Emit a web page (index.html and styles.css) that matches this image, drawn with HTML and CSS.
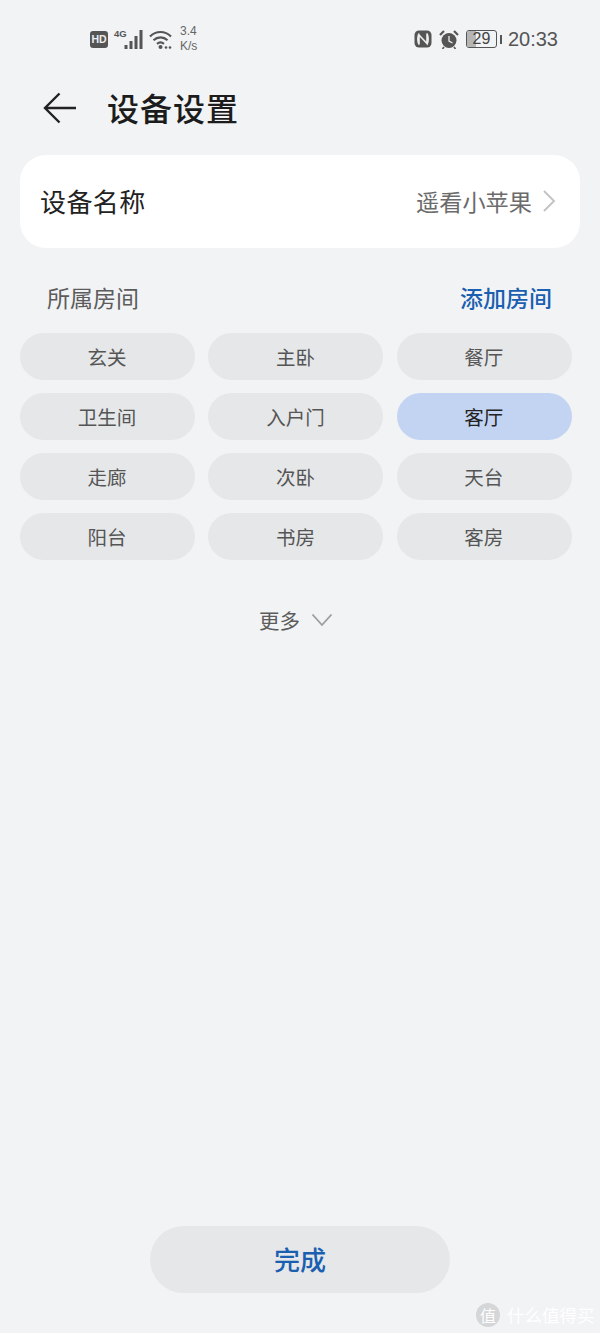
FILE: index.html
```html
<!DOCTYPE html>
<html lang="zh-CN">
<head>
<meta charset="utf-8">
<title>设备设置</title>
<link rel="stylesheet" href="styles.css">
</head>
<body>
<div class="page">
  <div class="status">
    <div class="status-left">
      <span class="hd">HD</span>
      <span class="net-label">4G</span>
      <svg class="bars" width="19" height="19" viewBox="0 0 19 19"><g fill="#555"><rect x="0.500" y="15" width="3" height="4"/><rect x="5.500" y="11" width="3" height="8"/><rect x="10.500" y="6" width="3" height="13"/><rect x="15.500" y="0" width="3" height="19"/></g></svg>
      <svg class="wifi" width="23" height="19" viewBox="0 0 23 19"><g fill="none" stroke="#555" stroke-width="2.200"><path d="M1 6.500C7 .5 16 .5 22 6.500"/><path d="M4.500 10.300C8.500 6.500 14.500 6.500 18.500 10.300"/><path d="M8 13.800C10 12.300 13 12.300 15 13.800"/></g><g fill="#555"><circle cx="11.500" cy="17" r="2"/><circle cx="17" cy="17.500" r="1.300"/><circle cx="21" cy="17.500" r="1.300"/></g></svg>
      <span class="speed">3.4<br>K/s</span>
    </div>
    <div class="status-right">
      <svg class="nfc" width="18" height="18" viewBox="0 0 18 18"><rect x="0.500" y="0.500" width="17" height="17" rx="4.500" fill="#555"/><path d="M5 3.500C3.500 7 3.500 11 5 14.500V5l8 8.500V3.500C14.500 7 14.500 11 13 14.500" fill="none" stroke="#eee" stroke-width="1.600"/></svg>
      <svg class="alarm" width="20" height="19" viewBox="0 0 20 19"><circle cx="10" cy="10.500" r="7.500" fill="#555"/><path d="M10 6v5l3.500 2" fill="none" stroke="#eee" stroke-width="1.300"/><path d="M1 5 5 1M19 5l-4-4" stroke="#555" stroke-width="2.200"/><path d="M5 17l-1.500 2M15 17l1.500 2" stroke="#555" stroke-width="1.600"/></svg>
      <span class="battery"><span class="battery-body"><span class="battery-fill"></span><span class="battery-num">29</span></span><span class="battery-cap"></span></span>
      <span class="clock">20:33</span>
    </div>
  </div>

  <header class="title-bar">
    <svg class="back" width="34" height="32" viewBox="0 0 34 32"><path d="M33 16H2M16.500 1.500 2 16l14.500 14.500" fill="none" stroke="#222" stroke-width="2.400"/></svg>
    <h1 class="title">设备设置</h1>
  </header>

  <section class="name-card">
    <span class="name-label">设备名称</span>
    <span class="name-value">遥看小苹果
      <svg class="chev" width="14" height="22" viewBox="0 0 14 22"><path d="M2 1l10 10L2 21" fill="none" stroke="#c4c4c4" stroke-width="2"/></svg>
    </span>
  </section>

  <div class="room-head">
    <span class="room-title">所属房间</span>
    <span class="room-add">添加房间</span>
  </div>

  <div class="rooms">
    <div class="room">玄关</div>
    <div class="room">主卧</div>
    <div class="room">餐厅</div>
    <div class="room">卫生间</div>
    <div class="room">入户门</div>
    <div class="room active">客厅</div>
    <div class="room">走廊</div>
    <div class="room">次卧</div>
    <div class="room">天台</div>
    <div class="room">阳台</div>
    <div class="room">书房</div>
    <div class="room">客房</div>
  </div>

  <div class="more">
    <span>更多</span>
    <svg width="22" height="14" viewBox="0 0 22 14"><path d="M1.500 1.500 11 12l9.500-10.500" fill="none" stroke="#9a9c9f" stroke-width="1.800"/></svg>
  </div>

  <div class="spacer"></div>

  <div class="done-wrap"><button class="done">完成</button></div>

  <div class="watermark"><span class="wm-badge">值</span><span>什么值得买</span></div>
</div>
</body>
</html>
```
FILE: styles.css
```css
* { box-sizing: border-box; }
html, body { margin: 0; padding: 0; }
body {
  width: 600px;
  height: 1333px;
  overflow: hidden;
  background: #f1f3f5;
  font-family: "Noto Sans CJK SC", "Liberation Sans", sans-serif;
}
.page {
  position: relative;
  height: 1333px;
  display: flex;
  flex-direction: column;
}
.status {
  height: 51px;
  padding: 23px 42px 0 90px;
  display: flex;
  justify-content: space-between;
  color: #555;
  flex: none;
}
.status-left, .status-right { display: flex; align-items: center; height: 32px; }
.hd {
  width: 18px; height: 17px;
  background: #555; color: #eee;
  border-radius: 3px;
  font: 700 10.500px/17px "Liberation Sans", sans-serif;
  text-align: center;
}
.net-label { font: 700 9.500px/10px "Liberation Sans", sans-serif; margin: -11px 0 0 6px; width: 10px; }
.bars { margin-left: 0; }
.wifi { margin-left: 6px; }
.speed { font: 12px/15px "Liberation Sans", sans-serif; margin-left: 8px; color: #666; }
.nfc { margin-right: 7px; }
.alarm { margin-right: 7px; }
.battery { display: flex; align-items: center; }
.battery-body {
  position: relative;
  width: 31px; height: 18px;
  border: 1.500px solid #555;
  border-radius: 3px;
  overflow: hidden;
  display: block;
}
.battery-fill { position: absolute; left: 0; top: 0; bottom: 0; width: 9px; background: #b5b5b5; }
.battery-num { position: relative; display: block; font: 16px/15px "Liberation Sans", sans-serif; text-align: center; color: #444; }
.battery-cap { width: 2px; height: 9px; background: #555; margin-left: 3px; }
.clock { font: 20px/24px "Liberation Sans", sans-serif; margin-left: 6px; color: #555; }

.title-bar { height: 104px; padding: 10px 0 0 43px; display: flex; align-items: center; flex: none; }
.back { display: block; }
.title { margin: -2px 0 0 30px; font-size: 32px; line-height: 40px; font-weight: 500; color: #1c1c1c; letter-spacing: 1px; }

.name-card {
  margin: 0 20px;
  height: 93px;
  background: #fff;
  border-radius: 26px;
  padding: 0 24px 2px 20px;
  display: flex;
  align-items: center;
  justify-content: space-between;
  flex: none;
}
.name-label { font-size: 26px; line-height: 36px; color: #222; letter-spacing: 0.400px; }
.name-value { display: flex; align-items: center; gap: 10px; font-size: 23.200px; line-height: 32px; color: #6b6b6b; }

.room-head {
  margin-top: 31px;
  height: 36px;
  padding: 0 48px 0 47px;
  display: flex;
  justify-content: space-between;
  align-items: center;
  flex: none;
}
.room-title { font-size: 23px; line-height: 32px; color: #5c5c5c; }
.room-add { font-size: 23px; line-height: 32px; font-weight: 500; color: #1a5fb0; }

.rooms {
  margin: 18px 28px 0 20px;
  display: grid;
  grid-template-columns: repeat(3, 175px);
  column-gap: 13.400px;
  row-gap: 13px;
  flex: none;
}
.room {
  height: 47px;
  padding-right: 1px;
  border-radius: 24px;
  background: #e5e7e9;
  color: #555;
  font-size: 19.500px;
  line-height: 47px;
  text-align: center;
}
.room.active { background: #c3d4f3; color: #222; }

.more {
  margin-top: 45px;
  padding-left: 259px;
  height: 30px;
  display: flex;
  align-items: center;
  gap: 11px;
  font-size: 20.500px;
  color: #5c5c5c;
  flex: none;
}

.spacer { flex: 1; }

.done-wrap { display: flex; justify-content: center; padding-bottom: 40px; flex: none; }
.done {
  width: 300px;
  height: 67px;
  border: 0;
  border-radius: 34px;
  background: #e5e7e9;
  color: #1a5fb0;
  font: 500 26px/65px "Noto Sans CJK SC", sans-serif;
  padding: 0 0 2px;
}

.watermark {
  position: absolute;
  left: 476px;
  top: 1303px;
  display: flex;
  align-items: center;
  gap: 7px;
  font-size: 17.500px;
  line-height: 24px;
  color: #fff;
}
.wm-badge {
  width: 24px; height: 24px;
  border-radius: 50%;
  background: #d4d6d8;
  color: #fff;
  font-size: 16px;
  line-height: 24px;
  text-align: center;
}
```
